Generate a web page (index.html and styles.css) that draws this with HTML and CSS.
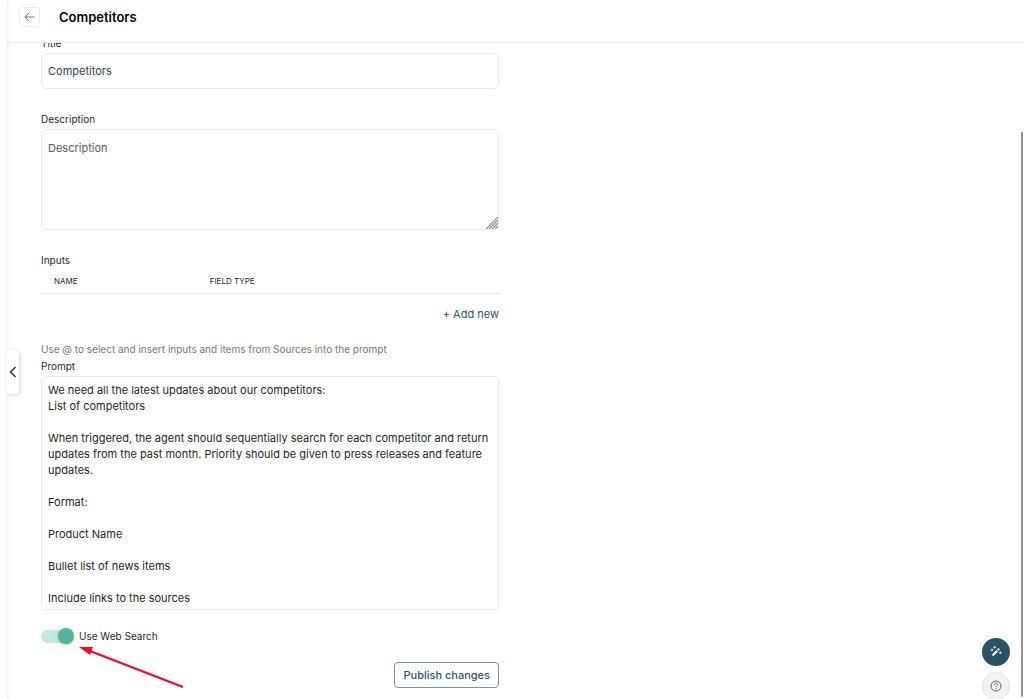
FILE: index.html
```html
<!DOCTYPE html>
<html lang="en">
<head>
    <meta charset="UTF-8">
    <meta name="viewport" content="width=device-width, initial-scale=1.0">
    <title>Competitors</title>
    <link rel="stylesheet" href="styles.css">
</head>
<body>
    <div class="app">
        <aside class="sidebar">
            <button type="button" class="sidebar-toggle" aria-label="Open sidebar">
                <svg width="8" height="12" viewBox="0 0 8 12" fill="none" stroke="#333" stroke-width="1.5"><path d="M6.5 1 1.5 6l5 5"/></svg>
            </button>
        </aside>

        <main class="main">
            <header class="header">
                <button type="button" class="back-button" aria-label="Back">
                    <svg width="11" height="10" viewBox="0 0 11 10" fill="none" stroke="#777" stroke-width="1" stroke-linecap="round" stroke-linejoin="round"><path d="M10 5H1M5 1 1 5l4 4"/></svg>
                </button>
                <h1>Competitors</h1>
            </header>

            <div class="content">
                <form class="agent-form">
                    <div class="form-group">
                        <label for="title">Title</label>
                        <input type="text" id="title" name="title" class="field" value="Competitors">
                    </div>

                    <div class="form-group">
                        <label for="description">Description</label>
                        <div class="resizable">
                            <textarea id="description" name="description" class="field description" placeholder="Description"></textarea>
                            <svg class="resize-grip" width="12" height="12" viewBox="0 0 12 12" stroke="#888" stroke-width="1.2"><path d="M0 12 12 0M3 12l9-9M6 12l6-6M9 12l3-3"/></svg>
                        </div>
                    </div>

                    <div class="inputs-group">
                        <h2>Inputs</h2>
                        <table class="inputs-table">
                            <thead>
                                <tr><th class="name-column">Name</th><th>Field type</th></tr>
                            </thead>
                        </table>
                        <button type="button" class="add-button">+ Add new</button>
                    </div>

                    <p class="helper-text">Use @ to select and insert inputs and items from Sources into the prompt</p>
                    <div class="prompt-group">
                        <label for="prompt">Prompt</label>
                        <textarea id="prompt" name="prompt" class="field prompt" spellcheck="false">We need all the latest updates about our competitors:
List of competitors

When triggered, the agent should sequentially search for each competitor and return updates from the past month. Priority should be given to press releases and feature updates.

Format:

Product Name

Bullet list of news items

Include links to the sources</textarea>
                    </div>

                    <div class="switch-row">
                        <input type="checkbox" id="web-search" name="web-search" class="switch" checked>
                        <label for="web-search">Use Web Search</label>
                        <svg class="pointer-arrow" width="106" height="44" viewBox="0 0 106 44"><path d="M11 5 104 41" stroke="#ee0a2c" stroke-width="2.4"/><path d="M0 1h14l-3 8z" fill="#ee0a2c"/></svg>
                    </div>

                    <button type="submit" class="publish-button">Publish changes</button>
                </form>
            </div>
        </main>

        <div class="scroll-thumb"></div>
        <div class="floating-actions">
            <button type="button" class="round-button magic" aria-label="Assistant">
                <svg width="14" height="14" viewBox="0 0 14 14" fill="#fff"><path d="M2.800 9.800 7.600 5l1.400 1.400-4.800 4.800zM8.200 4.400l1.300-1.300 1.400 1.400-1.300 1.300z"/><path d="m5.700 1.100.4.8.8.4-.8.4-.4.8-.4-.8-.8-.4.8-.4zM3 3.800l.4.800.8.4-.8.4-.4.8-.4-.8-.8-.4.8-.4zM11.300 6.500l.4.800.8.4-.8.4-.4.800-.4-.8-.8-.4.8-.4z" stroke="#fff" stroke-width=".4"/></svg>
            </button>
            <button type="button" class="round-button help" aria-label="Help">
                <svg width="12" height="12" viewBox="0 0 12 12" fill="none" stroke="#666" stroke-width="1"><circle cx="6" cy="6" r="5"/><path d="M4.400 4.800c0-2.200 3.200-2.100 3.200-.2C7.600 5.800 6 5.800 6 7.200M6 8v1"/></svg>
            </button>
        </div>
    </div>

    <script>
        document.querySelector('.agent-form').addEventListener('submit', function(event) {
            event.preventDefault();
        });
    </script>
</body>
</html>
```
FILE: styles.css
```css
* {
    box-sizing: border-box;
}
body {
    margin: 0;
    font-family: Inter, "Liberation Sans", sans-serif;
    font-size: 11px;
    line-height: 16px;
    color: #1f1f1f;
    background-color: #ffffff;
}
button, input, textarea {
    font-family: inherit;
}
button {
    cursor: pointer;
}
.app {
    position: relative;
    display: flex;
    height: 100vh;
    overflow: hidden;
}
.sidebar {
    position: relative;
    z-index: 1;
    flex: 0 0 7px;
    background-color: #fdfdfd;
    box-shadow: 0 0 3px rgba(0, 0, 0, 0.14);
}
.sidebar-toggle {
    position: absolute;
    top: 50%;
    left: 100%;
    display: flex;
    align-items: center;
    justify-content: center;
    width: 12px;
    height: 44px;
    padding: 0;
    border: none;
    border-radius: 0 4px 4px 0;
    background-color: #ffffff;
    box-shadow: 1px 1px 4px rgba(0, 0, 0, 0.18);
}
.main {
    flex: 1;
    display: flex;
    flex-direction: column;
    min-width: 0;
}

/* header */
.header {
    flex: none;
    display: flex;
    align-items: center;
    gap: 19px;
    height: 43px;
    padding: 0 12px 8px;
    border-bottom: 1px solid #ebebeb;
}
.back-button {
    display: flex;
    align-items: center;
    justify-content: center;
    width: 21px;
    height: 20px;
    padding: 0;
    border: 1px solid #eeeeee;
    border-radius: 3px;
    background-color: #ffffff;
}
h1 {
    margin: 0;
    font-size: 13px;
    font-weight: 600;
    line-height: 20px;
    color: #000000;
}

/* form */
.content {
    flex: 1;
    display: grid;
    grid-template-columns: 1fr 1fr;
    gap: 32px;
    min-height: 0;
    padding: 0 35px 0 34px;
    overflow: hidden;
}
/* scrolled a little under the header */
.agent-form {
    display: flex;
    flex-direction: column;
    margin-top: -7px;
}
.form-group {
    margin-bottom: 23px;
}
label, h2 {
    display: block;
    margin: 0 0 2px;
    font-size: 10px;
    font-weight: 400;
    line-height: 15px;
}
.field {
    display: block;
    width: 100%;
    padding: 6px;
    border: 1px solid #ececec;
    border-radius: 5px;
    outline: none;
    background-color: #ffffff;
    font-size: 11px;
    line-height: 16px;
    color: #374151;
    resize: none;
}
input.field {
    height: 36px;
}
.resizable {
    position: relative;
}
.description {
    height: 101px;
    padding-top: 10px;
}
.description::placeholder {
    color: #555b66;
}
.resize-grip {
    position: absolute;
    right: 1px;
    bottom: 1px;
    pointer-events: none;
}
.inputs-group {
    display: flex;
    flex-direction: column;
}
.inputs-table {
    width: 100%;
    border-collapse: collapse;
    border-bottom: 1px solid #e5e5e5;
}
.inputs-table th {
    padding: 3px 13px 4px;
    font-size: 8px;
    font-weight: 400;
    text-align: left;
    text-transform: uppercase;
}
.name-column {
    width: 34%;
}
.add-button {
    align-self: flex-end;
    margin-top: 12px;
    padding: 0;
    border: none;
    background: none;
    font-size: 11px;
    line-height: 16px;
    color: #2f5569;
}
.helper-text {
    margin: 19px 0 2px;
    font-size: 10px;
    color: #777777;
}
.prompt {
    height: 234px;
    padding-top: 5px;
    padding-bottom: 0;
    color: #1f1f1f;
    overflow: hidden;
}
.switch-row {
    position: relative;
    display: flex;
    align-items: center;
    gap: 5px;
    height: 16px;
    margin-top: 18px;
}
.switch-row label {
    margin: 0;
}
.switch {
    display: flex;
    align-items: center;
    justify-content: flex-end;
    appearance: none;
    width: 33px;
    height: 13px;
    margin: 0;
    border-radius: 7px;
    background-color: #c0eae0;
    cursor: pointer;
}
.switch::before {
    content: "";
    width: 16px;
    height: 16px;
    border-radius: 50%;
    background-color: #52b5a2;
    box-shadow: 0 1px 3px rgba(0, 0, 0, 0.25);
}
.switch:not(:checked) {
    justify-content: flex-start;
    background-color: #dddddd;
}
.pointer-arrow {
    position: absolute;
    top: 18px;
    left: 38px;
    pointer-events: none;
}
.publish-button {
    align-self: flex-end;
    margin-top: 18px;
    padding: 4px 8px;
    border: 1px solid #7894a4;
    border-radius: 4px;
    background-color: #ffffff;
    font-size: 11px;
    font-weight: 500;
    line-height: 16px;
    color: #2f5569;
}

/* overlays */
.scroll-thumb {
    position: absolute;
    top: 132px;
    right: 1px;
    bottom: 2px;
    width: 2px;
    border-radius: 1px;
    background-color: #929292;
}
.floating-actions {
    position: absolute;
    right: 14px;
    bottom: -1px;
    display: flex;
    flex-direction: column;
    gap: 6px;
}
.round-button {
    display: flex;
    align-items: center;
    justify-content: center;
    width: 28px;
    height: 28px;
    padding: 0;
    border: none;
    border-radius: 50%;
}
.magic {
    background-color: #2c5265;
}
.help {
    border: 1px solid #e4e4e4;
    background-color: #f3f3f3;
}
```
